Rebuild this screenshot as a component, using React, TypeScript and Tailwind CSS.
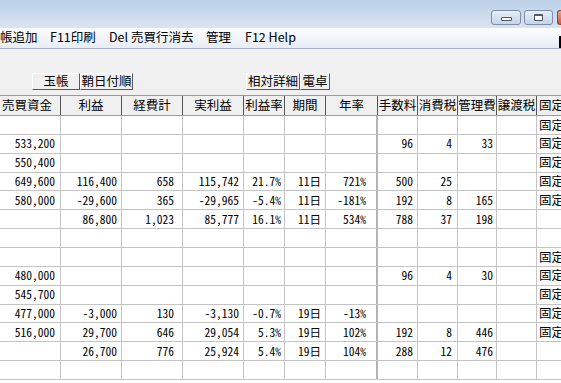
const colW = [
  "w-[61px]",
  "w-[61px]",
  "w-[61px]",
  "w-[61px]",
  "w-[41px]",
  "w-[41px]",
  "w-[52px]",
  "w-[40px]",
  "w-[40px]",
  "w-[39px]",
  "w-[40px]",
  "flex-1",
];

const colPad = [
  "pr-[5px]",
  "pr-[4px]",
  "pr-[8px]",
  "pr-[4px]",
  "pr-[3px]",
  "pr-[4px]",
  "pr-[10px]",
  "pr-[4px]",
  "pr-[5px]",
  "pr-[3px]",
  "pr-[4px]",
  "",
];

const headers = ["売買資金", "利益", "経費計", "実利益", "利益率", "期間", "年率", "手数料", "消費税", "管理費", "譲渡税", "固定"];

const rows: { v: string[]; fixed: boolean }[] = [
  { v: ["", "", "", "", "", "", "", "", "", "", ""], fixed: true },
  { v: ["533,200", "", "", "", "", "", "", "96", "4", "33", ""], fixed: true },
  { v: ["550,400", "", "", "", "", "", "", "", "", "", ""], fixed: true },
  { v: ["649,600", "116,400", "658", "115,742", "21.7%", "11日", "721%", "500", "25", "", ""], fixed: true },
  { v: ["580,000", "-29,600", "365", "-29,965", "-5.4%", "11日", "-181%", "192", "8", "165", ""], fixed: true },
  { v: ["", "86,800", "1,023", "85,777", "16.1%", "11日", "534%", "788", "37", "198", ""], fixed: false },
  { v: ["", "", "", "", "", "", "", "", "", "", ""], fixed: false },
  { v: ["", "", "", "", "", "", "", "", "", "", ""], fixed: true },
  { v: ["480,000", "", "", "", "", "", "", "96", "4", "30", ""], fixed: true },
  { v: ["545,700", "", "", "", "", "", "", "", "", "", ""], fixed: true },
  { v: ["477,000", "-3,000", "130", "-3,130", "-0.7%", "19日", "-13%", "", "", "", ""], fixed: true },
  { v: ["516,000", "29,700", "646", "29,054", "5.3%", "19日", "102%", "192", "8", "446", ""], fixed: true },
  { v: ["", "26,700", "776", "25,924", "5.4%", "19日", "104%", "288", "12", "476", ""], fixed: false },
  { v: ["", "", "", "", "", "", "", "", "", "", ""], fixed: false },
];

const font = "font-['Noto_Sans_CJK_JP','Noto_Sans',sans-serif]";

const ToolButton = ({ label, w }: { label: string; w: string }) => (
  <div
    className={`${w} h-[17px] flex items-center justify-center bg-[#f0f0f0] border border-t-white border-l-white border-r-[#5a5a5a] border-b-[#5a5a5a] text-[12.5px] leading-none text-black whitespace-nowrap`}
  >
    {label}
  </div>
);

export default function App() {
  return (
    <div className={`w-[561px] h-[383px] overflow-hidden bg-white flex flex-col ${font}`}>
      {/* title bar */}
      <div className="h-[28px] shrink-0 bg-gradient-to-b from-[#bcd0e7] to-[#d9e5f2] flex items-start pt-[10px]">
        <div className="ml-auto flex">
          <div className="w-[30px] h-[15px] rounded-[3px] border border-[#7d8ea6] bg-gradient-to-b from-[#e6eef7] to-[#c5d5e8] flex items-end justify-center pb-[3px]">
            <div className="w-[11px] h-[4px] bg-white border border-[#4d5a6c] rounded-[1px]" />
          </div>
          <div className="ml-[3px] w-[29px] h-[15px] rounded-[3px] border border-[#7d8ea6] bg-gradient-to-b from-[#e6eef7] to-[#c5d5e8] flex items-center justify-center">
            <div className="w-[9px] h-[7px] bg-white border border-[#4d5a6c] border-t-2 rounded-[1px]" />
          </div>
          <div className="ml-[4px] w-[4px] h-[15px] rounded-l-[3px] border border-r-0 border-[#8a4a3e] bg-gradient-to-b from-[#e8a493] to-[#c85a40]" />
        </div>
      </div>

      {/* menu bar */}
      <div className="h-[21px] shrink-0 bg-gradient-to-b from-[#fdfdfe] to-[#e7ecf5] border-b border-[#aab3c4] flex items-end text-[12.5px] text-black">
        <div className="flex items-center h-full pb-[1px]">
          <span className="w-[50px]">帳追加</span>
          <span className="w-[59px]">F11印刷</span>
          <span className="w-[97px]">Del 売買行消去</span>
          <span className="w-[39px]">管理</span>
          <span>F12 Help</span>
        </div>
        <div className="ml-auto w-[2px] h-[12px] bg-black" />
      </div>

      {/* toolbar */}
      <div className="h-[46px] shrink-0 bg-[#f0f0f0] flex items-start pt-[24px]">
        <div className="ml-[32px] flex">
          <ToolButton label="玉帳" w="w-[48px]" />
          <ToolButton label="鞘日付順" w="w-[53px]" />
        </div>
        <div className="ml-[113px] flex">
          <ToolButton label="相対詳細" w="w-[54px]" />
          <ToolButton label="電卓" w="w-[30px]" />
        </div>
      </div>

      {/* header */}
      <div className="h-[21px] shrink-0 flex bg-[#f0f0f0] border-t border-b border-[#9a9a9a] text-[12.5px] text-black">
        {headers.map((h, i) => (
          <div
            key={i}
            className={`${colW[i]} h-full flex items-center overflow-hidden whitespace-nowrap ${
              i === 11 ? "justify-start pl-[2px]" : i === 0 ? "justify-start pl-[2px] border-r border-[#555555]" : "justify-center border-r border-[#555555]"
            }`}
          >
            {h}
          </div>
        ))}
      </div>

      {/* rows */}
      {rows.map((r, ri) => (
        <div key={ri} className="h-[18.86px] shrink-0 flex border-b border-[#c4c4c4] text-black">
          {r.v.map((c, ci) => (
            <div
              key={ci}
              className={`${colW[ci]} h-full flex items-center justify-end whitespace-nowrap text-[11.5px] [font-feature-settings:'hwid'] ${colPad[ci]} ${
                ci === 6 ? "border-r-2 border-[#b4b4b4]" : "border-r border-[#c4c4c4]"
              }`}
            >
              {c}
            </div>
          ))}
          <div className="flex-1 h-full flex items-center pl-[2px] text-[12.5px] whitespace-nowrap overflow-hidden">
            {r.fixed ? "固定" : ""}
          </div>
        </div>
      ))}
    </div>
  );
}
